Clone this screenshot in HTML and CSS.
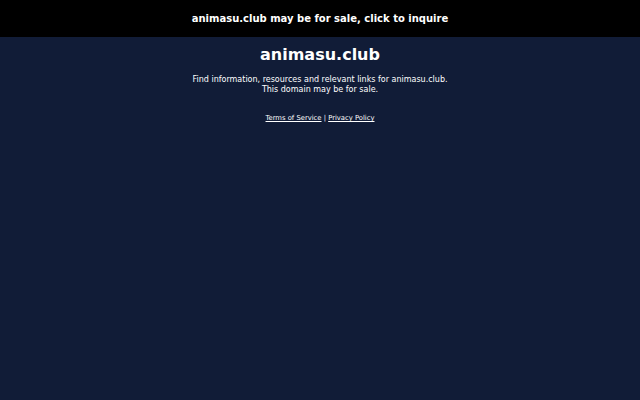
FILE: index.html
```html
<!DOCTYPE html>
<html>
<head>
<meta charset="utf-8">
<link rel="stylesheet" href="styles.css">
</head>
<body>
<div class="banner">animasu.club may be for sale, click to inquire</div>
<main class="content">
<h1 class="title">animasu.club</h1>
<p class="desc">Find information, resources and relevant links for animasu.club.<br>This domain may be for sale.</p>
<p class="links"><a href="#">Terms of Service</a> | <a href="#">Privacy Policy</a></p>
</main>
</body>
</html>
```
FILE: styles.css
```css
html, body {
  margin: 0;
  padding: 0;
  height: 100%;
}
body {
  background: #111c37;
  color: #ffffff;
  font-family: "DejaVu Sans", sans-serif;
}
.banner {
  background: #000000;
  height: 37px;
  display: flex;
  align-items: center;
  justify-content: center;
  font-weight: bold;
  font-size: 10px;
}
.content {
  display: flex;
  flex-direction: column;
  align-items: center;
  text-align: center;
}
.title {
  margin: 8px 0 0;
  font-size: 16px;
  font-weight: bold;
  line-height: 20px;
}
.desc {
  margin: 10px 0 0;
  font-size: 8px;
  line-height: 10px;
}
.links {
  margin: 19px 0 0;
  font-size: 6.8px;
  line-height: 9px;
}
.links a {
  color: #ffffff;
}
```
